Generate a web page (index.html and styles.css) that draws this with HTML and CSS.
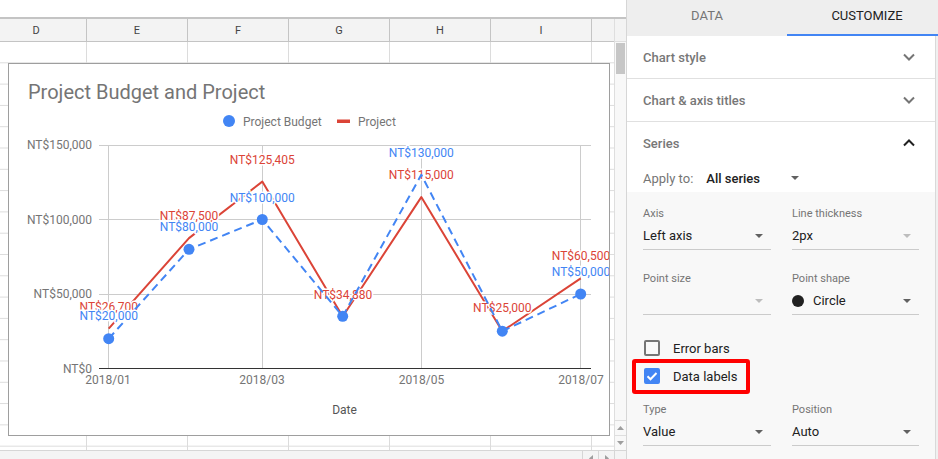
FILE: index.html
```html
<!DOCTYPE html>
<html>
<head>
<meta charset="utf-8">
<title>Chart editor</title>
<link rel="stylesheet" href="styles.css">
</head>
<body>
<div class="app">
  <div class="sheet">
    <div class="sheet-top"></div>
    <div class="sheet-mid">
      <div class="grid">
        <div class="col-head">
          <div class="ch ch-first">D</div>
          <div class="ch">E</div>
          <div class="ch">F</div>
          <div class="ch">G</div>
          <div class="ch">H</div>
          <div class="ch">I</div>
          <div class="ch ch-last"></div>
        </div>
        <div class="cells">
          <div class="chart">
            <svg class="chart-svg" width="600" height="371" viewBox="9 64 600 371">
              <text class="ct-title" x="28" y="99">Project Budget and Project</text>
              <circle class="fill-blue" cx="229" cy="121" r="6"/>
              <text class="ct-legend" x="243" y="125.5">Project Budget</text>
              <rect class="fill-red" x="337" y="119.5" width="13" height="3.5"/>
              <text class="ct-legend" x="358" y="125.5">Project</text>

              <g class="gridlines">
                <line x1="99" x2="591" y1="145.5" y2="145.5"/>
                <line x1="99" x2="591" y1="219.5" y2="219.5"/>
                <line x1="99" x2="591" y1="294.5" y2="294.5"/>
                <line x1="108.5" x2="108.5" y1="145" y2="368"/>
                <line x1="262.5" x2="262.5" y1="145" y2="368"/>
                <line x1="421.5" x2="421.5" y1="145" y2="368"/>
                <line x1="580.5" x2="580.5" y1="145" y2="368"/>
              </g>
              <line class="axis-line" x1="99" x2="591" y1="368.5" y2="368.5"/>

              <g class="ct-axis ct-y">
                <text x="92" y="149">NT$150,000</text>
                <text x="92" y="223.5">NT$100,000</text>
                <text x="92" y="298">NT$50,000</text>
                <text x="92" y="372.5">NT$0</text>
              </g>
              <g class="ct-axis ct-x">
                <text x="108" y="384">2018/01</text>
                <text x="262" y="384">2018/03</text>
                <text x="421.5" y="384">2018/05</text>
                <text x="581" y="384">2018/07</text>
              </g>
              <text class="ct-axis-title" x="344.5" y="414">Date</text>

              <polyline class="line-red" points="108.7,328.7 189,238.1 262.3,181.6 342.7,316.5 421.3,197.1 502.3,331.2 580.7,278.4"/>
              <g class="lbl lbl-red">
                <text x="108.7" y="310.5">NT$26,700</text>
                <text x="189" y="219.8">NT$87,500</text>
                <text x="262.3" y="164">NT$125,405</text>
                <text x="343" y="299">NT$34,880</text>
                <text x="421.3" y="178.8">NT$115,000</text>
                <text x="502.3" y="312">NT$25,000</text>
                <text x="581" y="259.8">NT$60,500</text>
              </g>

              <polyline class="line-blue" points="108.7,338.7 189,249.3 262.3,219.5 342.7,316.3 421.3,174.8 502.3,331.2 580.7,294"/>
              <g class="fill-blue">
                <circle cx="108.7" cy="338.7" r="5.5"/>
                <circle cx="189" cy="249.3" r="5.5"/>
                <circle cx="262.3" cy="219.5" r="5.5"/>
                <circle cx="342.7" cy="316.3" r="5.5"/>
                <circle cx="502.3" cy="331.2" r="5.5"/>
                <circle cx="580.7" cy="294" r="5.5"/>
              </g>
              <g class="lbl lbl-blue">
                <text x="108.7" y="320.3">NT$20,000</text>
                <text x="189" y="231.2">NT$80,000</text>
                <text x="262.3" y="201.6">NT$100,000</text>
                <text x="421.3" y="157">NT$130,000</text>
                <text x="581" y="276">NT$50,000</text>
              </g>
            </svg>
          </div>
        </div>
      </div>
      <div class="vscroll">
        <div class="vs-head"></div>
        <div class="vs-thumb"></div>
        <div class="vs-fill"></div>
        <div class="vs-btn"><svg class="stri" width="7" height="4" viewBox="0 0 7 4"><path d="M0 4h7L3.5 0z"/></svg></div>
        <div class="vs-btn"><svg class="stri" width="7" height="4" viewBox="0 0 7 4"><path d="M0 0h7L3.5 4z"/></svg></div>
      </div>
    </div>
    <div class="hscroll">
      <div class="hs-fill"></div>
      <div class="hs-btn"><svg class="stri" width="4" height="7" viewBox="0 0 4 7"><path d="M4 0v7L0 3.5z"/></svg></div>
      <div class="hs-btn"><svg class="stri" width="4" height="7" viewBox="0 0 4 7"><path d="M0 0v7L4 3.5z"/></svg></div>
      <div class="hs-corner"></div>
    </div>
  </div>

  <div class="panel">
    <div class="tabs">
      <div class="tab">DATA</div>
      <div class="tab tab-active">CUSTOMIZE</div>
    </div>
    <div class="panel-body">
      <div class="panel-content">
        <div class="acc">
          <span class="acc-title">Chart style</span>
          <svg class="chev" width="12" height="8" viewBox="0 0 12 8"><path d="M1 1.5l5 5 5-5"/></svg>
        </div>
        <div class="acc">
          <span class="acc-title">Chart &amp; axis titles</span>
          <svg class="chev" width="12" height="8" viewBox="0 0 12 8"><path d="M1 1.5l5 5 5-5"/></svg>
        </div>
        <div class="acc acc-open">
          <span class="acc-title">Series</span>
          <svg class="chev chev-dark" width="12" height="8" viewBox="0 0 12 8"><path d="M1 6.5l5-5 5 5"/></svg>
        </div>
        <div class="apply">
          <span class="apply-label">Apply to:</span>
          <span class="apply-value">All series</span>
          <svg class="tri" width="8" height="4" viewBox="0 0 8 4"><path d="M0 0h8L4 4z"/></svg>
        </div>
        <div class="series-body">
          <div class="fields">
            <div class="field">
              <div class="field-label">Axis</div>
              <div class="select"><span class="select-value">Left axis</span><svg class="tri" width="8" height="4" viewBox="0 0 8 4"><path d="M0 0h8L4 4z"/></svg></div>
            </div>
            <div class="field">
              <div class="field-label">Line thickness</div>
              <div class="select"><span class="select-value">2px</span><svg class="tri tri-off" width="8" height="4" viewBox="0 0 8 4"><path d="M0 0h8L4 4z"/></svg></div>
            </div>
            <div class="field">
              <div class="field-label">Point size</div>
              <div class="select"><span class="select-value"></span><svg class="tri tri-off" width="8" height="4" viewBox="0 0 8 4"><path d="M0 0h8L4 4z"/></svg></div>
            </div>
            <div class="field">
              <div class="field-label">Point shape</div>
              <div class="select"><span class="select-value"><span class="shape-dot"></span>Circle</span><svg class="tri" width="8" height="4" viewBox="0 0 8 4"><path d="M0 0h8L4 4z"/></svg></div>
            </div>
          </div>
          <div class="checks">
            <div class="check-row">
              <span class="cb"></span>
              <span class="check-text">Error bars</span>
            </div>
            <div class="check-row">
              <span class="cb cb-on"><svg width="12" height="12" viewBox="0 0 12 12"><path d="M1.5 6.2l3 3 6-6.2"/></svg></span>
              <span class="check-text">Data labels</span>
              <div class="annot"></div>
            </div>
          </div>
          <div class="fields fields-type">
            <div class="field">
              <div class="field-label">Type</div>
              <div class="select"><span class="select-value">Value</span><svg class="tri" width="8" height="4" viewBox="0 0 8 4"><path d="M0 0h8L4 4z"/></svg></div>
            </div>
            <div class="field">
              <div class="field-label">Position</div>
              <div class="select"><span class="select-value">Auto</span><svg class="tri" width="8" height="4" viewBox="0 0 8 4"><path d="M0 0h8L4 4z"/></svg></div>
            </div>
          </div>
        </div>
      </div>
      <div class="panel-scroll"></div>
    </div>
  </div>
</div>
</body>
</html>
```

FILE: styles.css
```css
* { box-sizing: border-box; }

html, body {
  margin: 0;
  padding: 0;
  width: 938px;
  height: 459px;
  overflow: hidden;
  background: #fff;
  font-family: Roboto, "Liberation Sans", Arial, sans-serif;
}

.app {
  display: flex;
  width: 938px;
  height: 459px;
}

/* ---------- spreadsheet ---------- */
.sheet {
  width: 626px;
  flex: 0 0 626px;
  display: flex;
  flex-direction: column;
  overflow: hidden;
}

.sheet-top {
  height: 19px;
  flex: 0 0 19px;
  border-bottom: 2px solid #c4c4c4;
  background: #fff;
}

.sheet-mid {
  flex: 0 0 431px;
  height: 431px;
  display: flex;
}

.grid {
  width: 614px;
  flex: 0 0 614px;
  display: flex;
  flex-direction: column;
  overflow: hidden;
}

.col-head {
  height: 23px;
  flex: 0 0 23px;
  display: flex;
  background: #f3f3f3;
  border-bottom: 1px solid #c4c4c4;
}

.ch {
  width: 101px;
  flex: 0 0 101px;
  border-right: 1px solid #c4c4c4;
  display: flex;
  align-items: center;
  justify-content: center;
  font-size: 11px;
  color: #444;
}

.ch-first { margin-left: -14px; }

.ch-last {
  flex: 1 1 auto;
  width: auto;
  border-right: none;
}

.cells {
  position: relative;
  flex: 1 1 auto;
  background-color: #fff;
  background-image:
    linear-gradient(to right, transparent 100px, #dcdcdc 100px),
    linear-gradient(to bottom, transparent 20.3px, #dcdcdc 20.3px);
  background-size: 101px 100%, 100% 21.3px;
  background-position: -14px 0, 0 0;
}

.chart {
  position: absolute;
  left: 8px;
  top: 21px;
  width: 602px;
  height: 373px;
  border: 1px solid #9e9e9e;
  background: #fff;
}

.chart-svg {
  display: block;
  overflow: hidden;
}

.chart-svg text {
  font-family: Roboto, "Liberation Sans", Arial, sans-serif;
}

.ct-title {
  font-size: 20px;
  fill: #757575;
}

.ct-legend {
  font-size: 12px;
  fill: #757575;
}

.ct-axis text {
  font-size: 12px;
  fill: #757575;
}

.ct-y text { text-anchor: end; }
.ct-x text { text-anchor: middle; }

.ct-axis-title {
  font-size: 12px;
  fill: #555;
  text-anchor: middle;
}

.gridlines line {
  stroke: #cccccc;
  stroke-width: 1;
}

.axis-line {
  stroke: #333;
  stroke-width: 1;
}

.fill-blue { fill: #4285f4; }
.fill-red { fill: #db4437; }

.line-red {
  fill: none;
  stroke: #db4437;
  stroke-width: 2;
  stroke-linejoin: round;
}

.line-blue {
  fill: none;
  stroke: #4285f4;
  stroke-width: 2;
  stroke-dasharray: 8 5;
  stroke-linejoin: round;
}

.lbl text {
  font-size: 12px;
  text-anchor: middle;
  paint-order: stroke;
  stroke: #fff;
  stroke-width: 3px;
  stroke-linejoin: round;
}

.lbl-red text { fill: #db4437; }
.lbl-blue text { fill: #4285f4; }

/* vertical scrollbar */
.vscroll {
  width: 12px;
  flex: 0 0 12px;
  display: flex;
  flex-direction: column;
  background: #f8f8f8;
  border-left: 1px solid #dedede;
}

.vs-head {
  height: 23px;
  flex: 0 0 23px;
  background: #f3f3f3;
  border-bottom: 1px solid #dedede;
}

.vs-thumb {
  height: 31px;
  flex: 0 0 31px;
  margin: 1px 1px 0 1px;
  background: #c6c6c6;
}

.vs-fill { flex: 1 1 auto; }

.vs-btn {
  height: 15px;
  flex: 0 0 15px;
  border-top: 1px solid #dedede;
  display: flex;
  align-items: center;
  justify-content: center;
}

.stri { fill: #9e9e9e; display: block; }

/* horizontal scrollbar */
.hscroll {
  height: 9px;
  flex: 0 0 9px;
  display: flex;
  background: #f4f4f4;
  border-top: 1px solid #d6d6d6;
}

.hs-fill { flex: 1 1 auto; }

.hs-btn {
  width: 16px;
  flex: 0 0 16px;
  border-left: 1px solid #d6d6d6;
  display: flex;
  justify-content: center;
  padding-top: 4px;
}

.hs-corner {
  width: 12px;
  flex: 0 0 12px;
  border-left: 1px solid #d6d6d6;
}

/* ---------- chart editor panel ---------- */
.panel {
  width: 312px;
  flex: 0 0 312px;
  border-left: 1px solid #d6d6d6;
  background: #eeeeee;
  display: flex;
  flex-direction: column;
  overflow: hidden;
}

.tabs {
  height: 36px;
  flex: 0 0 36px;
  display: flex;
  width: 320px;
  background: #eeeeee;
}

.tab {
  width: 160px;
  flex: 0 0 160px;
  display: flex;
  align-items: center;
  justify-content: center;
  padding-bottom: 3px;
  font-size: 13px;
  color: #757575;
  border-bottom: 2px solid transparent;
}

.tab-active {
  color: #212121;
  border-bottom-color: #4285f4;
}

.panel-body {
  flex: 1 1 auto;
  display: flex;
}

.panel-content {
  width: 308px;
  flex: 0 0 308px;
  background: #fff;
  display: flex;
  flex-direction: column;
}

.panel-scroll {
  flex: 1 1 auto;
  border-left: 1px solid #d9d9d9;
  background: #f0f0f0;
}

.acc {
  height: 43px;
  flex: 0 0 43px;
  padding: 0 20px 0 16px;
  display: flex;
  align-items: center;
  justify-content: space-between;
  border-bottom: 1px solid #e0e0e0;
}

.acc-open {
  height: 42px;
  flex: 0 0 42px;
  border-bottom: none;
}

.acc-title {
  font-size: 13px;
  font-weight: 500;
  color: #777;
}

.chev {
  display: block;
  fill: none;
  stroke: #757575;
  stroke-width: 2;
}

.chev-dark { stroke: #212121; }

.apply {
  height: 28px;
  flex: 0 0 28px;
  padding: 0 16px;
  display: flex;
  align-items: center;
  font-size: 13px;
}

.apply-label {
  color: #757575;
  margin-right: 13px;
}

.apply-value {
  width: 85px;
  color: #212121;
  font-weight: 500;
}

.tri {
  display: block;
  fill: #616161;
  flex: 0 0 auto;
}

.tri-off { fill: #bdbdbd; }

.series-body {
  flex: 1 1 auto;
  background: #f8f8f8;
  padding: 14px 16px 0 16px;
}

.fields {
  display: grid;
  grid-template-columns: 128px 127px;
  column-gap: 21px;
  row-gap: 21px;
}

.fields-type { margin-top: 12px; }

.field-label {
  height: 16px;
  line-height: 16px;
  font-size: 11px;
  color: #757575;
}

.select {
  height: 28px;
  display: flex;
  align-items: center;
  justify-content: space-between;
  padding-right: 8px;
  border-bottom: 1px solid #cbcbcb;
}

.select-value {
  display: flex;
  align-items: center;
  font-size: 13px;
  color: #212121;
}

.shape-dot {
  width: 12px;
  height: 12px;
  border-radius: 50%;
  background: #212121;
  margin-right: 9px;
}

.checks {
  margin-top: 19px;
  display: flex;
  flex-direction: column;
}

.check-row {
  position: relative;
  height: 28px;
  display: flex;
  align-items: center;
}

.cb {
  width: 16px;
  height: 16px;
  margin-left: 1px;
  margin-right: 13px;
  border: 2px solid #757575;
  border-radius: 2px;
  display: flex;
  align-items: center;
  justify-content: center;
}

.cb-on {
  background: #4285f4;
  border-color: #4285f4;
}

.cb-on svg {
  display: block;
  fill: none;
  stroke: #fff;
  stroke-width: 2;
}

.check-text {
  font-size: 13px;
  color: #212121;
}

.annot {
  position: absolute;
  left: -11px;
  top: -3px;
  width: 118px;
  height: 35px;
  border: 4px solid #ff0000;
  border-radius: 3px;
}
```
